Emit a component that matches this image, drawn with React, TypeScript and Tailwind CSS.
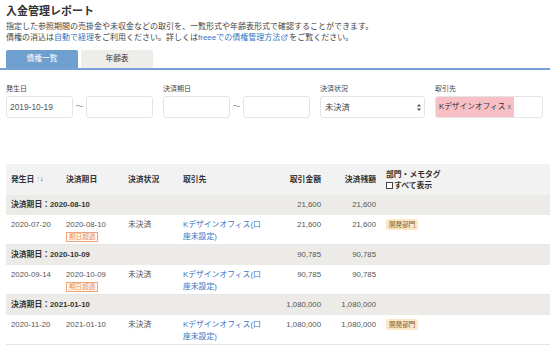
import { ExternalLink } from "lucide-react";

const font = { fontFamily: '"Liberation Sans", "Noto Sans CJK JP", sans-serif' };

const cols = "grid grid-cols-[55px_62px_55px_88px_60px_55px_1fr]";

function GroupRow({ date, amount }: { date: string; amount: string }) {
  return (
    <div className={`${cols} h-[20px] items-center bg-[#edebe7] text-[#555]`}>
      <div className="col-span-4 pl-[5px] font-bold text-[#333]">
        決済期日：{date}
      </div>
      <div className="pr-[5px] text-right">{amount}</div>
      <div className="pr-[5px] text-right">{amount}</div>
      <div />
    </div>
  );
}

function DataRow({
  issued,
  due,
  amount,
  overdue,
  tag,
}: {
  issued: string;
  due: string;
  amount: string;
  overdue?: boolean;
  tag?: boolean;
}) {
  return (
    <div
      className={`${cols} h-[30px] border-b border-[#e6e6e6] bg-white pt-[4px] leading-[12px] text-[#555]`}
    >
      <div className="pl-[5px]">{issued}</div>
      <div className="pl-[5px]">
        <div>{due}</div>
        {overdue && (
          <div className="mt-[1px] inline-block h-[10px] border border-[#f0a477] bg-[#fff7f2] px-[2px] text-[6.6px] leading-[8px] text-[#e9905a]">
            期日超過
          </div>
        )}
      </div>
      <div className="pl-[5px]">未決済</div>
      <div className="pl-[5px]">
        <span className="block w-[82px] text-[#3b74c2]">
          Kデザインオフィス(口座未設定)
        </span>
      </div>
      <div className="pr-[5px] text-right">{amount}</div>
      <div className="pr-[5px] text-right">{amount}</div>
      <div className="pl-[5px]">
        {tag && (
          <span className="inline-block h-[11px] rounded-[2px] bg-[#fde8c6] px-[3px] text-[6.6px] leading-[11px] text-[#7d5b2e]">
            開発部門
          </span>
        )}
      </div>
    </div>
  );
}

function TextBox({ value }: { value?: string }) {
  return (
    <div className="flex h-[22px] w-[67px] items-center rounded-[3px] border border-[#e4e4e4] bg-white pl-[3px] text-[8.4px] text-[#555]">
      {value}
    </div>
  );
}

function RangeField({ label, from }: { label: string; from?: string }) {
  return (
    <div className="flex flex-col">
      <div className="h-[10px] text-[7px] leading-[10px] text-[#444]">{label}</div>
      <div className="mt-[2px] flex items-center">
        <TextBox value={from} />
        <span className="w-[13px] text-center text-[8px] text-[#888]">〜</span>
        <TextBox />
      </div>
    </div>
  );
}

export default function App() {
  return (
    <div className="h-[348px] w-[550px] overflow-hidden bg-white text-[#333]" style={font}>
      <div className="px-[6px] pt-[4px]">
        <h1 className="h-[15px] text-[11px] font-bold leading-[15px] text-[#333]">
          入金管理レポート
        </h1>
        <div className="mt-[2px] text-[8px] leading-[11px] text-[#444]">
          <p>
            指定した参照期間の売掛金や未収金などの取引を、一覧形式や年齢表形式で確認することができます。
          </p>
          <p className="flex items-center">
            債権の消込は<span className="text-[#3b74c2]">自動で経理</span>
            をご利用ください。詳しくは
            <span className="text-[#3b74c2]">freeeでの債権管理方法</span>
            <ExternalLink className="mx-[1px] h-[7px] w-[7px] text-[#3b74c2]" strokeWidth={2.5} />
            をご覧ください。
          </p>
        </div>
        <div className="mt-[7px] flex gap-[3px]">
          <div className="flex h-[18px] w-[72px] items-center justify-center rounded-t-[2px] bg-[#6f9fcf] text-[7.7px] text-white">
            債権一覧
          </div>
          <div className="flex h-[18px] w-[72px] items-center justify-center rounded-t-[2px] bg-[#efedea] text-[7.7px] text-[#333]">
            年齢表
          </div>
        </div>
      </div>
      <div className="h-[2px] w-full bg-[#74a3d2]" />

      <div className="flex gap-[10px] px-[6px] pt-[14px]">
        <RangeField label="発生日" from="2019-10-19" />
        <RangeField label="決済期日" />
        <div className="flex flex-col">
          <div className="h-[10px] text-[7px] leading-[10px] text-[#444]">決済状況</div>
          <div className="mt-[2px] flex h-[22px] w-[105px] items-center justify-between rounded-[3px] border border-[#e4e4e4] bg-white pl-[4px] pr-[3px] text-[8.3px] text-[#444]">
            <span>未決済</span>
            <svg width="4" height="7" viewBox="0 0 4 7">
              <path d="M2 0 L4 2.6 L0 2.6 Z M2 7 L4 4.4 L0 4.4 Z" fill="#555" />
            </svg>
          </div>
        </div>
        <div className="flex flex-col">
          <div className="h-[10px] text-[7px] leading-[10px] text-[#444]">取引先</div>
          <div className="mt-[2px] flex h-[22px] w-[108px] rounded-[3px] border border-[#e4e4e4] bg-white">
            <div className="flex h-full w-[78px] items-center rounded-l-[2px] bg-[#f8bfc4] pl-[3px] text-[7.7px] text-[#333]">
              Kデザインオフィス <span className="ml-[2px] text-[7px] text-[#666]">x</span>
            </div>
          </div>
        </div>
      </div>

      <div className="mt-[46px] w-[600px] pl-[6px] text-[7.8px]">
        <div className={`${cols} h-[31px] items-center bg-[#f2f2f2] font-bold text-[#333]`}>
          <div className="flex items-center pl-[5px]">
            発生日
            <span className="ml-[2px] text-[7px] font-normal text-[#999]">↑</span>
            <span className="text-[7px] font-normal text-[#444]">↓</span>
          </div>
          <div className="pl-[5px]">決済期日</div>
          <div className="pl-[5px]">決済状況</div>
          <div className="pl-[5px]">取引先</div>
          <div className="pr-[5px] text-right">取引金額</div>
          <div className="pr-[5px] text-right">決済残額</div>
          <div className="pl-[5px] leading-[11px]">
            <div>部門・メモタグ</div>
            <div className="flex items-center">
              <span className="mr-[1px] inline-block h-[7px] w-[7px] border border-[#444] bg-white" />
              すべて表示
            </div>
          </div>
        </div>
        <GroupRow date="2020-08-10" amount="21,600" />
        <DataRow issued="2020-07-20" due="2020-08-10" amount="21,600" overdue tag />
        <GroupRow date="2020-10-09" amount="90,785" />
        <DataRow issued="2020-09-14" due="2020-10-09" amount="90,785" overdue />
        <GroupRow date="2021-01-10" amount="1,080,000" />
        <DataRow issued="2020-11-20" due="2021-01-10" amount="1,080,000" tag />
      </div>
    </div>
  );
}
